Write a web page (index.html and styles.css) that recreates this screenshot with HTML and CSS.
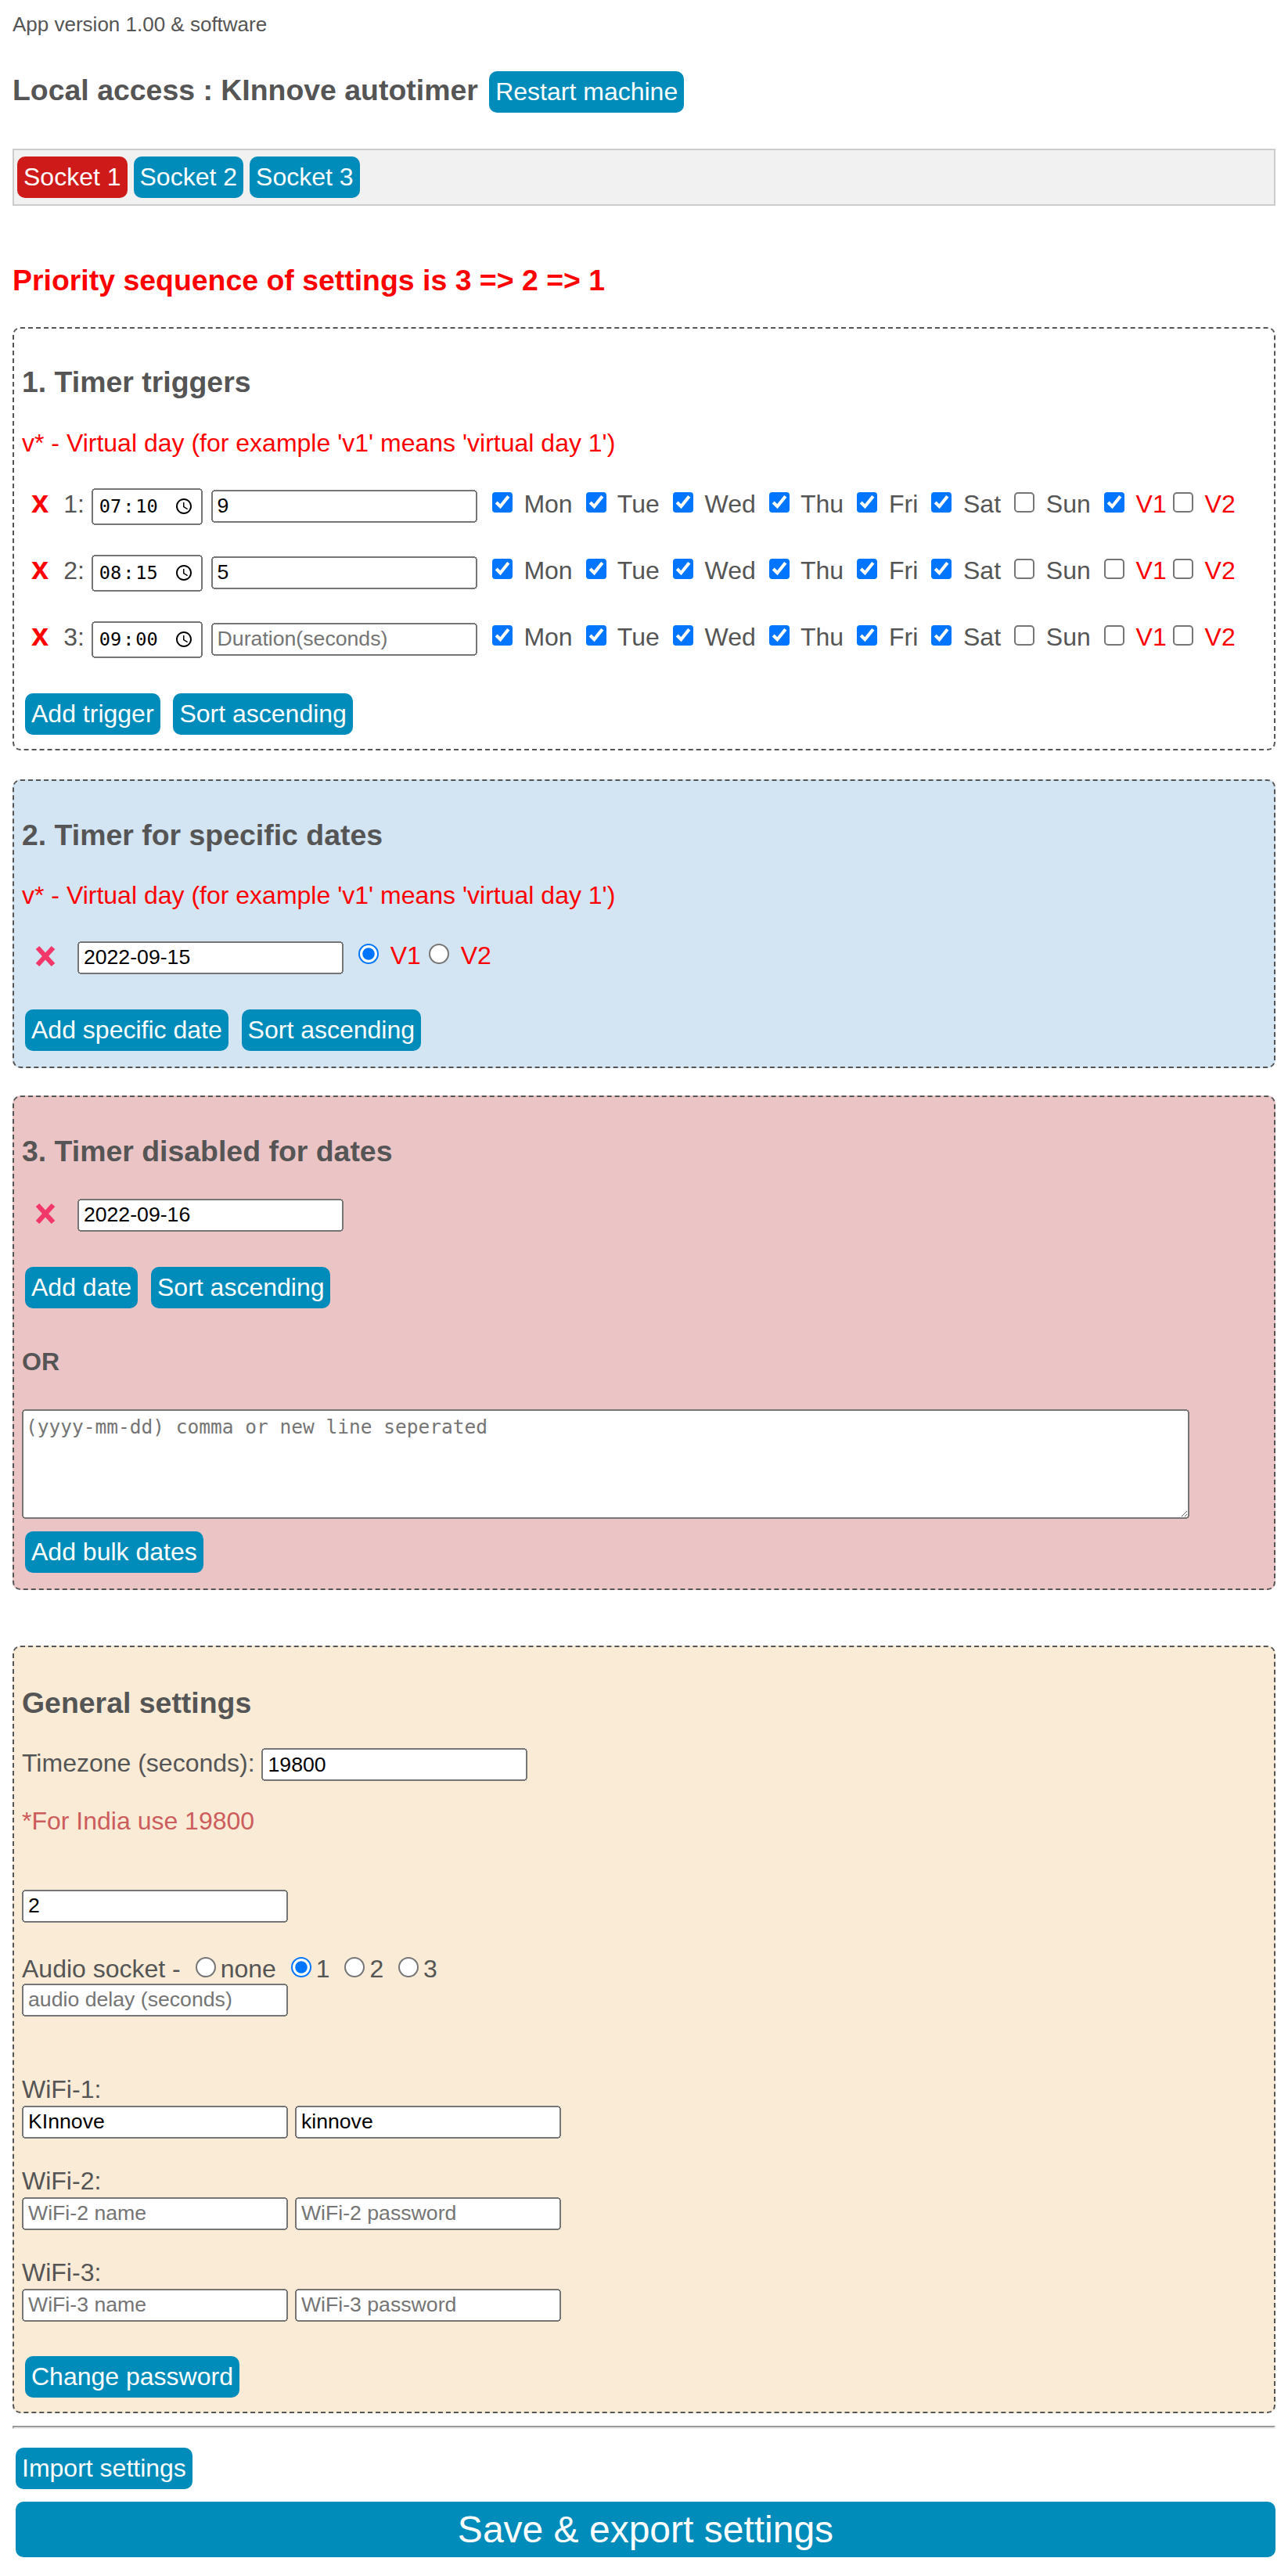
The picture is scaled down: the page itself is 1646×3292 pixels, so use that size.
FILE: index.html
```html
<!DOCTYPE html>
<html lang="en">
<head>
    <meta charset="UTF-8">
    <meta name="viewport" content="width=device-width, initial-scale=1.0">
    <title>KInnove autotimer</title>
    <link rel="stylesheet" href="styles.css">
</head>
<body>
    <div class="version">App version 1.00 &amp; software</div>

    <h3 class="title">Local access : KInnove autotimer <button class="btn restart">Restart machine</button></h3>

    <div class="tabs">
        <button class="btn active">Socket 1</button>
        <button class="btn">Socket 2</button>
        <button class="btn">Socket 3</button>
    </div>

    <h3 class="priority">Priority sequence of settings is 3 =&gt; 2 =&gt; 1</h3>

    <div class="box">
        <h3>1. Timer triggers</h3>
        <p class="virtual">v* - Virtual day (for example 'v1' means 'virtual day 1')</p>

        <div class="trigger">
            <span class="del">x</span>
            <span class="num">1:</span>
            <input type="time" value="07:10">
            <input type="text" value="9" placeholder="Duration(seconds)">
            <input type="checkbox" checked> <label>Mon</label>
            <input type="checkbox" checked> <label>Tue</label>
            <input type="checkbox" checked> <label>Wed</label>
            <input type="checkbox" checked> <label>Thu</label>
            <input type="checkbox" checked> <label>Fri</label>
            <input type="checkbox" checked> <label>Sat</label>
            <input type="checkbox"> <label>Sun</label>
            <input type="checkbox" checked> <label class="red">V1</label><input type="checkbox"> <label class="red">V2</label>
        </div>
        <div class="trigger">
            <span class="del">x</span>
            <span class="num">2:</span>
            <input type="time" value="08:15">
            <input type="text" value="5" placeholder="Duration(seconds)">
            <input type="checkbox" checked> <label>Mon</label>
            <input type="checkbox" checked> <label>Tue</label>
            <input type="checkbox" checked> <label>Wed</label>
            <input type="checkbox" checked> <label>Thu</label>
            <input type="checkbox" checked> <label>Fri</label>
            <input type="checkbox" checked> <label>Sat</label>
            <input type="checkbox"> <label>Sun</label>
            <input type="checkbox"> <label class="red">V1</label><input type="checkbox"> <label class="red">V2</label>
        </div>
        <div class="trigger">
            <span class="del">x</span>
            <span class="num">3:</span>
            <input type="time" value="09:00">
            <input type="text" placeholder="Duration(seconds)">
            <input type="checkbox" checked> <label>Mon</label>
            <input type="checkbox" checked> <label>Tue</label>
            <input type="checkbox" checked> <label>Wed</label>
            <input type="checkbox" checked> <label>Thu</label>
            <input type="checkbox" checked> <label>Fri</label>
            <input type="checkbox" checked> <label>Sat</label>
            <input type="checkbox"> <label>Sun</label>
            <input type="checkbox"> <label class="red">V1</label><input type="checkbox"> <label class="red">V2</label>
        </div>

        <div class="actions">
            <button class="btn">Add trigger</button>
            <button class="btn">Sort ascending</button>
        </div>
    </div>

    <div class="box blue">
        <h3>2. Timer for specific dates</h3>
        <p class="virtual">v* - Virtual day (for example 'v1' means 'virtual day 1')</p>

        <div class="date-row">
            <svg class="cross" viewBox="0 0 14 14"><path d="M2 1.5 L12 12.5 M12 1.5 L2 12.5"/></svg>
            <input type="text" value="2022-09-15">
            <input type="radio" name="v" checked> <label class="red">V1</label><input type="radio" name="v"> <label class="red">V2</label>
        </div>

        <div class="actions">
            <button class="btn">Add specific date</button>
            <button class="btn">Sort ascending</button>
        </div>
    </div>

    <div class="box pink">
        <h3>3. Timer disabled for dates</h3>

        <div class="date-row flat">
            <svg class="cross" viewBox="0 0 14 14"><path d="M2 1.5 L12 12.5 M12 1.5 L2 12.5"/></svg>
            <input type="text" value="2022-09-16">
        </div>

        <div class="actions">
            <button class="btn">Add date</button>
            <button class="btn">Sort ascending</button>
        </div>

        <p class="or">OR</p>

        <textarea placeholder="(yyyy-mm-dd) comma or new line seperated"></textarea>

        <div class="bulk">
            <button class="btn">Add bulk dates</button>
        </div>
    </div>

    <div class="box sand">
        <h3>General settings</h3>

        <div class="line">Timezone (seconds): <input type="text" value="19800"></div>
        <p class="note">*For India use 19800</p>

        <div class="single"><input type="text" value="2"></div>

        <div class="audio">
            Audio socket -
            <input type="radio" name="audio"><label>none</label>
            <input type="radio" name="audio" checked><label>1</label>
            <input type="radio" name="audio"><label>2</label>
            <input type="radio" name="audio"><label>3</label>
        </div>
        <div><input type="text" placeholder="audio delay (seconds)"></div>

        <div class="wifi first">
            <div class="wifi-label">WiFi-1:</div>
            <input type="text" value="KInnove">
            <input type="text" value="kinnove">
        </div>
        <div class="wifi">
            <div class="wifi-label">WiFi-2:</div>
            <input type="text" placeholder="WiFi-2 name">
            <input type="text" placeholder="WiFi-2 password">
        </div>
        <div class="wifi">
            <div class="wifi-label">WiFi-3:</div>
            <input type="text" placeholder="WiFi-3 name">
            <input type="text" placeholder="WiFi-3 password">
        </div>

        <div class="actions password">
            <button class="btn">Change password</button>
        </div>
    </div>

    <hr>

    <button class="btn import">Import settings</button>
    <button class="btn save">Save &amp; export settings</button>
</body>
</html>
```

FILE: styles.css
```css
html {
    zoom: 2;
}
body {
    font-family: "Liberation Sans", Arial, sans-serif;
    font-size: 16px;
    color: #555;
    margin: 8px;
}
h3 {
    font-size: 18.72px;
    margin: 18.72px 0;
}
label {
    color: #555;
}
.red {
    color: #f00;
}
.version {
    font-size: 13px;
}
.title {
    margin: 22px 0 0;
}
.btn {
    font-family: "Liberation Sans", Arial, sans-serif;
    font-size: 16px;
    color: #fff;
    background-color: #008CBA;
    border: none;
    border-radius: 5px;
    padding: 4px;
    margin: 0;
}
.restart {
    margin-left: 2px;
}
.active {
    background-color: #cf1a1a;
}
.tabs {
    display: flex;
    gap: 4px;
    background-color: #f1f1f1;
    border: 1px solid #ccc;
    padding: 4px 2px;
    margin-top: 23px;
}
.priority {
    color: #f00;
    margin: 37px 0 19px;
}
.box {
    border: 1px dashed #555;
    border-radius: 5px;
    padding: 5px;
    margin-bottom: 18.5px;
}
.blue {
    background-color: #d3e4f2;
    margin-bottom: 17.5px;
}
.pink {
    background-color: #ebc4c6;
}
.sand {
    background-color: #faebd7;
    margin-top: 35.5px;
    margin-bottom: 0;
}
.sand h3 {
    margin: 19.7px 0 15.7px;
}
.virtual {
    color: #f00;
    margin: 16px 0 7.25px;
}
input[type="text"] {
    font-family: "Liberation Sans", Arial, sans-serif;
    font-size: 13.33px;
    width: 170px;
    height: 21px;
    box-sizing: border-box;
    padding: 1px 2px;
    margin: 0;
}
input[type="time"] {
    font-family: "DejaVu Sans Mono", monospace;
    font-size: 11.8px;
    width: 71px;
    height: 23.5px;
    box-sizing: border-box;
    padding: 1px 4px 1px 2px;
    margin: 0;
}
input[type="time"]::-webkit-datetime-edit-ampm-field {
    display: none;
}
input[type="time"]::-webkit-calendar-picker-indicator {
    width: 12px;
    height: 12px;
    margin: 0;
    padding: 0;
}
.trigger {
    height: 42.5px;
    line-height: 42.5px;
    white-space: nowrap;
    padding-left: 6px;
}
.trigger input[type="text"] {
    margin: 0 1px;
}
.trigger + .actions {
    margin: 16px 0 4px 2px;
}
.del {
    color: #f00;
    font-weight: bold;
    font-size: 20px;
    margin-right: 5px;
}
.actions {
    margin: 14.5px 0 5px 2px;
}
.actions .btn {
    margin-right: 2px;
    margin-left: 0;
}
.actions .btn + .btn {
    margin-left: 2px;
}
.date-row {
    line-height: 24px;
    padding-left: 8px;
    margin-top: 17px;
}
.date-row + .actions {
    margin-top: 22.5px;
}
.flat {
    margin-top: -2px;
}
.flat + .actions {
    margin-top: 22.5px;
}
.cross {
    width: 14px;
    height: 14px;
    vertical-align: -2px;
    margin-right: 9px;
}
.cross path {
    stroke: #f2386a;
    stroke-width: 3.1;
    fill: none;
}
.or {
    font-weight: bold;
    margin: 25px 0 21px;
}
textarea {
    display: block;
    font-family: "DejaVu Sans Mono", monospace;
    font-size: 12.25px;
    width: 746px;
    height: 70px;
    box-sizing: border-box;
    padding: 3px 2px 2px 1.5px;
    margin: 0;
}
.bulk {
    margin: 8px 0 5px 2px;
}
.line {
    line-height: 24px;
}
.note {
    color: #cd5c5c;
    margin: 16px 0 0;
}
.single {
    margin-top: 34.5px;
}
.audio {
    margin-top: 19px;
    line-height: 19px;
}
.wifi {
    margin-top: 18px;
}
.wifi-label {
    margin-bottom: 1px;
}
.wifi.first {
    margin-top: 37.5px;
}
.password {
    margin: 22px 0 4px 2px;
}
hr {
    margin: 8px 0 12px;
}
.import {
    display: block;
    margin: 0 2px 8px;
}
.save {
    display: block;
    font-size: 24px;
    width: calc(100% - 2px);
    margin: 0 0 0 2px;
}
```
